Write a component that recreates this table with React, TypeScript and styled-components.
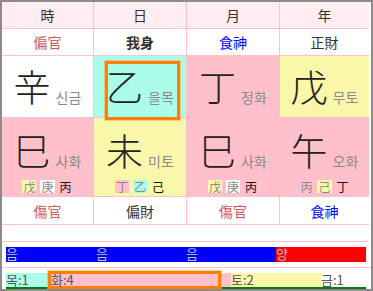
import React from 'react';
import styled, { createGlobalStyle } from 'styled-components';

const PINK = '#ffc0cb';
const AQUA = '#abfdea';
const YELLOW = '#f9f8aa';
const RED_TEXT = '#d0585a';
const BLUE_TEXT = '#0000ff';
const DARK = '#333333';
const ORANGE = '#ff8000';

type Hidden = { c: string; bg?: string };

type Pillar = {
  label: string;
  god: string;
  godColor: string;
  godBold?: boolean;
  stem: string;
  stemKr: string;
  stemBg: string;
  focus?: boolean;
  branch: string;
  branchKr: string;
  branchBg: string;
  hidden: Hidden[];
  bottomGod: string;
  bottomColor: string;
};

const pillars: Pillar[] = [
  {
    label: '時', god: '偏官', godColor: RED_TEXT,
    stem: '辛', stemKr: '신금', stemBg: '#ffffff',
    branch: '巳', branchKr: '사화', branchBg: PINK,
    hidden: [{ c: '戊', bg: YELLOW }, { c: '庚', bg: '#ffffff' }, { c: '丙' }],
    bottomGod: '傷官', bottomColor: RED_TEXT,
  },
  {
    label: '日', god: '我身', godColor: DARK, godBold: true,
    stem: '乙', stemKr: '을목', stemBg: AQUA, focus: true,
    branch: '未', branchKr: '미토', branchBg: YELLOW,
    hidden: [{ c: '丁', bg: PINK }, { c: '乙', bg: AQUA }, { c: '己' }],
    bottomGod: '偏財', bottomColor: DARK,
  },
  {
    label: '月', god: '食神', godColor: BLUE_TEXT,
    stem: '丁', stemKr: '정화', stemBg: PINK,
    branch: '巳', branchKr: '사화', branchBg: PINK,
    hidden: [{ c: '戊', bg: YELLOW }, { c: '庚', bg: '#ffffff' }, { c: '丙' }],
    bottomGod: '傷官', bottomColor: RED_TEXT,
  },
  {
    label: '年', god: '正財', godColor: DARK,
    stem: '戊', stemKr: '무토', stemBg: YELLOW,
    branch: '午', branchKr: '오화', branchBg: PINK,
    hidden: [{ c: '丙', bg: PINK }, { c: '己', bg: YELLOW }, { c: '丁' }],
    bottomGod: '食神', bottomColor: BLUE_TEXT,
  },
];

const yinYang = [
  { text: '음', yang: false },
  { text: '음', yang: false },
  { text: '음', yang: false },
  { text: '양', yang: true },
];

const elements = [
  { text: '목:1', count: 1, bg: AQUA },
  { text: '화:4', count: 4, bg: PINK, focus: true },
  { text: '토:2', count: 2, bg: YELLOW },
  { text: '금:1', count: 1, bg: '#ffffff' },
];

const GlobalStyle = createGlobalStyle`
  body {
    margin: 0;
    background: #ffffff;
    font-family: "Noto Sans CJK KR", "Noto Sans", sans-serif;
  }
`;

const Frame = styled.div`
  width: 373px;
  height: 291px;
  box-sizing: border-box;
  border: 2px solid #8c8c8c;
  background: #ffffff;
  overflow: hidden;
`;

const PillarGrid = styled.div`
  display: grid;
  grid-template-columns: 91px 92px 92px 89px;
  grid-template-rows: 26px 26px 61px 78px 27px 16px;
  gap: 1px;
  background: ${PINK};
  border-bottom: 1px solid ${PINK};
  width: 367px;
`;

const Cell = styled.div<{ $bg?: string }>`
  position: relative;
  display: flex;
  align-items: center;
  justify-content: center;
  background: ${(p) => p.$bg || '#ffffff'};
`;

const HeadCell = styled(Cell)`
  font-size: 14px;
  color: ${DARK};
  background: #ffedf1;
`;

const GodCell = styled(Cell)<{ $color: string; $bold?: boolean }>`
  font-size: 14px;
  color: ${(p) => p.$color};
  font-weight: ${(p) => (p.$bold ? 700 : 400)};
`;

const EmptyRow = styled.div`
  grid-column: 1 / -1;
  background: #ffffff;
`;

const BigChar = styled.span`
  font-size: 37px;
  font-weight: 300;
  line-height: 1;
  color: #222222;
`;

const KrLabel = styled.span`
  font-size: 14px;
  line-height: 1;
  color: #8a8a8a;
  margin-left: 5px;
  align-self: flex-end;
  margin-bottom: 1px;
`;

const StemInner = styled.div`
  display: flex;
  align-items: flex-end;
`;

const FocusBox = styled.div`
  position: absolute;
  left: 11px;
  top: 5px;
  width: 75px;
  height: 59px;
  box-sizing: border-box;
  border: 3px solid ${ORANGE};
  box-shadow: 0 0 0 1px rgba(255, 170, 80, 0.6);
  z-index: 2;
  pointer-events: none;
`;

const BranchCell = styled(Cell)`
  flex-direction: column;
  justify-content: flex-start;
  padding-top: 14px;
`;

const HiddenRow = styled.div`
  display: flex;
  gap: 4px;
  margin-top: 11px;
`;

const HiddenStem = styled.span<{ $bg?: string }>`
  font-size: 12px;
  line-height: 13px;
  padding: 0 1px;
  color: ${(p) => (p.$bg ? '#8a8a8a' : '#111111')};
  background: ${(p) => p.$bg || 'transparent'};
`;

const BarSection = styled.div`
  padding: 5px 0 5px 4px;
  border-bottom: 1px solid ${PINK};
`;

const FiveSection = styled.div`
  padding: 5px 0 0 4px;
`;

const Bar = styled.div`
  display: flex;
  width: 360px;
  height: 15px;
`;

const FiveBar = styled(Bar)`
  height: 14px;
  border-bottom: 2px solid #008000;
`;

const YinYangSeg = styled.div<{ $yang: boolean }>`
  flex: 1;
  background: ${(p) => (p.$yang ? '#ff0000' : '#0000ff')};
  color: #c4c4c4;
  font-size: 13px;
  line-height: 13px;
`;

const ElementSeg = styled.div<{ $bg: string; $count: number }>`
  position: relative;
  flex: ${(p) => p.$count};
  background: ${(p) => p.$bg};
  color: #555555;
  font-size: 13px;
  line-height: 14px;
`;

const SegFocus = styled.div`
  position: absolute;
  left: -3px;
  top: -2px;
  width: 173px;
  height: 18px;
  box-sizing: border-box;
  border: 3px solid ${ORANGE};
  box-shadow: 0 0 0 1px rgba(255, 170, 80, 0.6);
  pointer-events: none;
`;

const SegText = styled.span`
  position: relative;
  z-index: 1;
`;

export default function App() {
  return (
    <>
      <GlobalStyle />
      <Frame>
        <PillarGrid>
          {pillars.map((p) => (
            <HeadCell key={'h' + p.label}>{p.label}</HeadCell>
          ))}
          {pillars.map((p) => (
            <GodCell key={'g' + p.label} $color={p.godColor} $bold={p.godBold}>
              {p.god}
            </GodCell>
          ))}
          {pillars.map((p) => (
            <Cell key={'s' + p.label} $bg={p.stemBg}>
              <StemInner>
                <BigChar>{p.stem}</BigChar>
                <KrLabel>{p.stemKr}</KrLabel>
              </StemInner>
              {p.focus && <FocusBox />}
            </Cell>
          ))}
          {pillars.map((p) => (
            <BranchCell key={'b' + p.label} $bg={p.branchBg}>
              <StemInner>
                <BigChar>{p.branch}</BigChar>
                <KrLabel>{p.branchKr}</KrLabel>
              </StemInner>
              <HiddenRow>
                {p.hidden.map((h, i) => (
                  <HiddenStem key={i} $bg={h.bg}>
                    {h.c}
                  </HiddenStem>
                ))}
              </HiddenRow>
            </BranchCell>
          ))}
          {pillars.map((p) => (
            <GodCell key={'t' + p.label} $color={p.bottomColor}>
              {p.bottomGod}
            </GodCell>
          ))}
          <EmptyRow />
        </PillarGrid>
        <BarSection>
          <Bar>
            {yinYang.map((s, i) => (
              <YinYangSeg key={i} $yang={s.yang}>
                {s.text}
              </YinYangSeg>
            ))}
          </Bar>
        </BarSection>
        <FiveSection>
          <FiveBar>
            {elements.map((e) => (
              <ElementSeg key={e.text} $bg={e.bg} $count={e.count}>
                {e.focus && <SegFocus />}
                <SegText>{e.text}</SegText>
              </ElementSeg>
            ))}
          </FiveBar>
        </FiveSection>
      </Frame>
    </>
  );
}
